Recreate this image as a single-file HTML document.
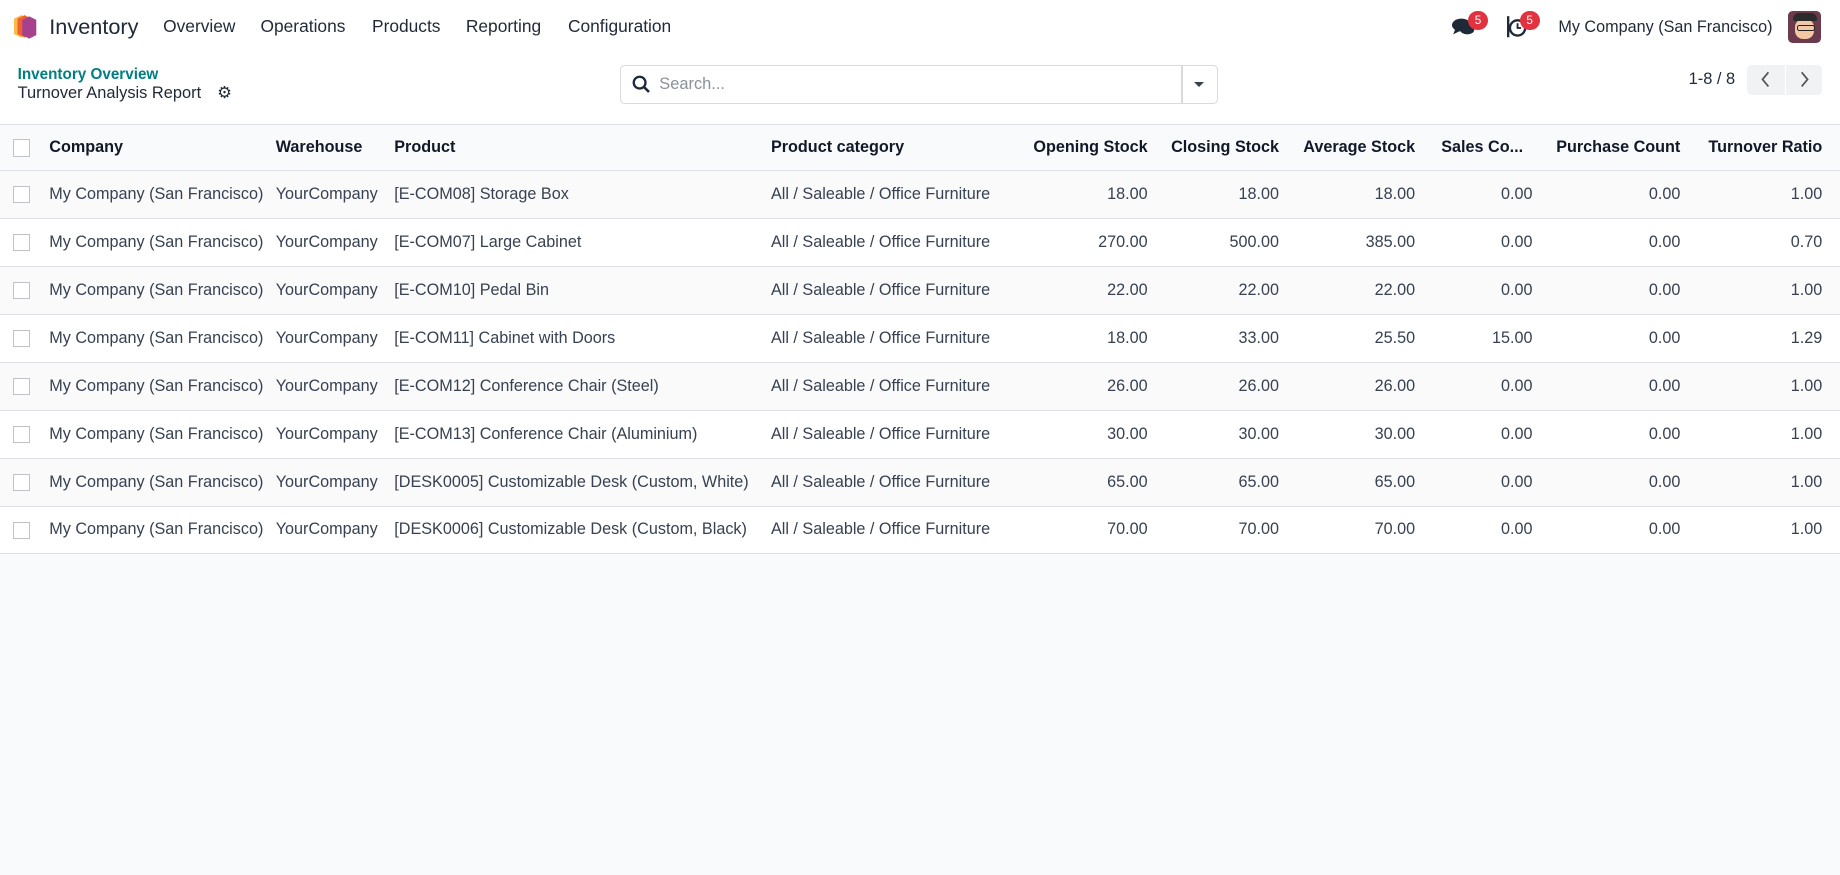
<!DOCTYPE html>
<html><head><meta charset="utf-8"><style>
html,body{margin:0;padding:0;}
body{width:1568px;height:745px;zoom:1.173469;background:#f9fafb;font-family:"Liberation Sans",sans-serif;color:#374151;overflow:hidden;position:relative;}
.nav{position:absolute;left:0;top:0;width:1568px;height:46px;background:#fff;}
.nav span{position:absolute;top:14px;font-size:14.8px;color:#1f2937;}
.cp{position:absolute;left:0;top:46px;width:1568px;height:60px;background:#fff;}
.badge{position:absolute;width:17px;height:17px;border-radius:9px;background:#e0323f;color:#fff;font-size:10px;text-align:center;line-height:17px;}
table{position:absolute;left:0;top:106px;border-collapse:collapse;table-layout:fixed;width:1568px;font-size:13.8px;}
th,td{height:40px;padding:0 4px;white-space:nowrap;overflow:hidden;text-overflow:clip;border-bottom:1px solid #dee2e6;}
th{background:#f9fafb;font-weight:bold;color:#111827;text-align:left;height:38px;border-top:1px solid #dee2e6;}
td{background:#fff;color:#374151;}
tr:nth-child(even) td{background:#fafafa;}
.r{text-align:right;}
.cb{display:inline-block;width:13px;height:13px;border:1px solid #bfc3c8;background:#fff;margin-left:7px;vertical-align:middle;}
</style></head><body>
<div class="nav">
<svg style="position:absolute;left:12px;top:12px" width="20" height="22" viewBox="0 0 20 22"><polygon points="6,1 12,4 12,17 6,20 0,17 0,4" fill="#fbb945"/><polygon points="9,1 15,4 15,17 9,20 3,17 3,4" fill="#f06030"/><polygon points="13,2 19,5 19,18 13,21 7,18 7,5" fill="#a5418d"/></svg>
<span style="left:42px;top:12px;font-size:18.5px;">Inventory</span>
<span style="left:139px">Overview</span>
<span style="left:222px">Operations</span>
<span style="left:317px">Products</span>
<span style="left:397px">Reporting</span>
<span style="left:484px">Configuration</span>
<svg style="position:absolute;left:1237px;top:15px" width="20" height="17" viewBox="0 0 20 17"><ellipse cx="8" cy="6" rx="8" ry="5.5" fill="#1f2937"/><path d="M3 9 L1 14 L7 11Z" fill="#1f2937"/><ellipse cx="13" cy="10" rx="6" ry="4" fill="#1f2937"/></svg>
<div class="badge" style="left:1251px;top:9px">5</div>
<svg style="position:absolute;left:1284px;top:13px" width="18" height="20" viewBox="0 0 18 20"><rect x="0" y="1" width="2" height="18" fill="#1f2937"/><circle cx="9" cy="11" r="6.5" fill="none" stroke="#1f2937" stroke-width="2"/><path d="M9 7v4h3" stroke="#1f2937" stroke-width="1.6" fill="none"/></svg>
<div class="badge" style="left:1295px;top:9px">5</div>
<span style="left:1328px;font-size:13.8px;top:15px">My Company (San Francisco)</span>
<div style="position:absolute;left:1524px;top:9px;width:28px;height:28px;border-radius:4px;background:#6b3b4d;overflow:hidden"><div style="position:absolute;left:6px;top:7px;width:16px;height:17px;border-radius:7px;background:#f3c8a5"></div><div style="position:absolute;left:4px;top:2px;width:20px;height:7px;border-radius:6px 6px 2px 2px;background:#2b2b2b"></div><div style="position:absolute;left:7px;top:12px;width:14px;height:4px;border:1px solid #222;border-radius:2px"></div></div>
</div>
<div class="cp">
<div style="position:absolute;left:15px;top:10px;font-size:13px;font-weight:bold;color:#017e84">Inventory Overview</div>
<div style="position:absolute;left:15px;top:26px;font-size:14px;color:#1f2937">Turnover Analysis Report</div>
<div style="position:absolute;left:185px;top:25px;font-size:14px;color:#1f2937">⚙</div>
<div style="position:absolute;left:528px;top:9px;width:508px;height:32px;border:1px solid #d8dadd;border-radius:4px;background:#fff">
<svg style="position:absolute;left:10px;top:8px" width="16" height="16" viewBox="0 0 16 16"><circle cx="6.5" cy="6.5" r="5" fill="none" stroke="#1f2937" stroke-width="2"/><path d="M10 10l4.5 4.5" stroke="#1f2937" stroke-width="2.2"/></svg>
<span style="position:absolute;left:33px;top:8px;font-size:14px;color:#8c9299">Search...</span>
<div style="position:absolute;left:478px;top:0;width:1px;height:32px;background:#d8dadd"></div>
<div style="position:absolute;left:489px;top:14px;border-left:5px solid transparent;border-right:5px solid transparent;border-top:5px solid #374151"></div>
</div>
<div style="position:absolute;left:1439px;top:14px;font-size:14px;color:#1f2937">1-8 / 8</div>
<div style="position:absolute;left:1489px;top:9px;width:64px;height:26px;background:#f1f2f4;border-radius:4px">
<div style="position:absolute;left:32px;top:0;width:1px;height:26px;background:#fff"></div>
<svg style="position:absolute;left:10px;top:5px" width="12" height="16" viewBox="0 0 12 16"><path d="M8 2L3 8l5 6" stroke="#555" stroke-width="1.5" fill="none"/></svg>
<svg style="position:absolute;left:42px;top:5px" width="12" height="16" viewBox="0 0 12 16"><path d="M4 2l5 6-5 6" stroke="#555" stroke-width="1.5" fill="none"/></svg>
</div>
</div>
<table>
<colgroup><col style="width:38px"><col style="width:193px"><col style="width:101px"><col style="width:321px"><col style="width:213px"><col style="width:116px"><col style="width:112px"><col style="width:116px"><col style="width:100px"><col style="width:126px"><col style="width:121px"><col style="width:11px"></colgroup>
<tr><th style="padding:0"><span class="cb" style="margin-left:11px"></span></th><th>Company</th><th>Warehouse</th><th>Product</th><th>Product category</th><th class="r">Opening Stock</th><th class="r">Closing Stock</th><th class="r">Average Stock</th><th class="r" style="padding-right:12px">Sales Co...</th><th class="r">Purchase Count</th><th class="r">Turnover Ratio</th><th></th></tr>
<tr><td style="padding:0"><span class="cb" style="margin-left:11px"></span></td><td>My Company (San Francisco)</td><td>YourCompany</td><td>[E-COM08] Storage Box</td><td>All / Saleable / Office Furniture</td><td class="r">18.00</td><td class="r">18.00</td><td class="r">18.00</td><td class="r">0.00</td><td class="r">0.00</td><td class="r">1.00</td><td></td></tr>
<tr><td style="padding:0"><span class="cb" style="margin-left:11px"></span></td><td>My Company (San Francisco)</td><td>YourCompany</td><td>[E-COM07] Large Cabinet</td><td>All / Saleable / Office Furniture</td><td class="r">270.00</td><td class="r">500.00</td><td class="r">385.00</td><td class="r">0.00</td><td class="r">0.00</td><td class="r">0.70</td><td></td></tr>
<tr><td style="padding:0"><span class="cb" style="margin-left:11px"></span></td><td>My Company (San Francisco)</td><td>YourCompany</td><td>[E-COM10] Pedal Bin</td><td>All / Saleable / Office Furniture</td><td class="r">22.00</td><td class="r">22.00</td><td class="r">22.00</td><td class="r">0.00</td><td class="r">0.00</td><td class="r">1.00</td><td></td></tr>
<tr><td style="padding:0"><span class="cb" style="margin-left:11px"></span></td><td>My Company (San Francisco)</td><td>YourCompany</td><td>[E-COM11] Cabinet with Doors</td><td>All / Saleable / Office Furniture</td><td class="r">18.00</td><td class="r">33.00</td><td class="r">25.50</td><td class="r">15.00</td><td class="r">0.00</td><td class="r">1.29</td><td></td></tr>
<tr><td style="padding:0"><span class="cb" style="margin-left:11px"></span></td><td>My Company (San Francisco)</td><td>YourCompany</td><td>[E-COM12] Conference Chair (Steel)</td><td>All / Saleable / Office Furniture</td><td class="r">26.00</td><td class="r">26.00</td><td class="r">26.00</td><td class="r">0.00</td><td class="r">0.00</td><td class="r">1.00</td><td></td></tr>
<tr><td style="padding:0"><span class="cb" style="margin-left:11px"></span></td><td>My Company (San Francisco)</td><td>YourCompany</td><td>[E-COM13] Conference Chair (Aluminium)</td><td>All / Saleable / Office Furniture</td><td class="r">30.00</td><td class="r">30.00</td><td class="r">30.00</td><td class="r">0.00</td><td class="r">0.00</td><td class="r">1.00</td><td></td></tr>
<tr><td style="padding:0"><span class="cb" style="margin-left:11px"></span></td><td>My Company (San Francisco)</td><td>YourCompany</td><td>[DESK0005] Customizable Desk (Custom, White)</td><td>All / Saleable / Office Furniture</td><td class="r">65.00</td><td class="r">65.00</td><td class="r">65.00</td><td class="r">0.00</td><td class="r">0.00</td><td class="r">1.00</td><td></td></tr>
<tr><td style="padding:0"><span class="cb" style="margin-left:11px"></span></td><td>My Company (San Francisco)</td><td>YourCompany</td><td>[DESK0006] Customizable Desk (Custom, Black)</td><td>All / Saleable / Office Furniture</td><td class="r">70.00</td><td class="r">70.00</td><td class="r">70.00</td><td class="r">0.00</td><td class="r">0.00</td><td class="r">1.00</td><td></td></tr>
</table>
</body></html>
